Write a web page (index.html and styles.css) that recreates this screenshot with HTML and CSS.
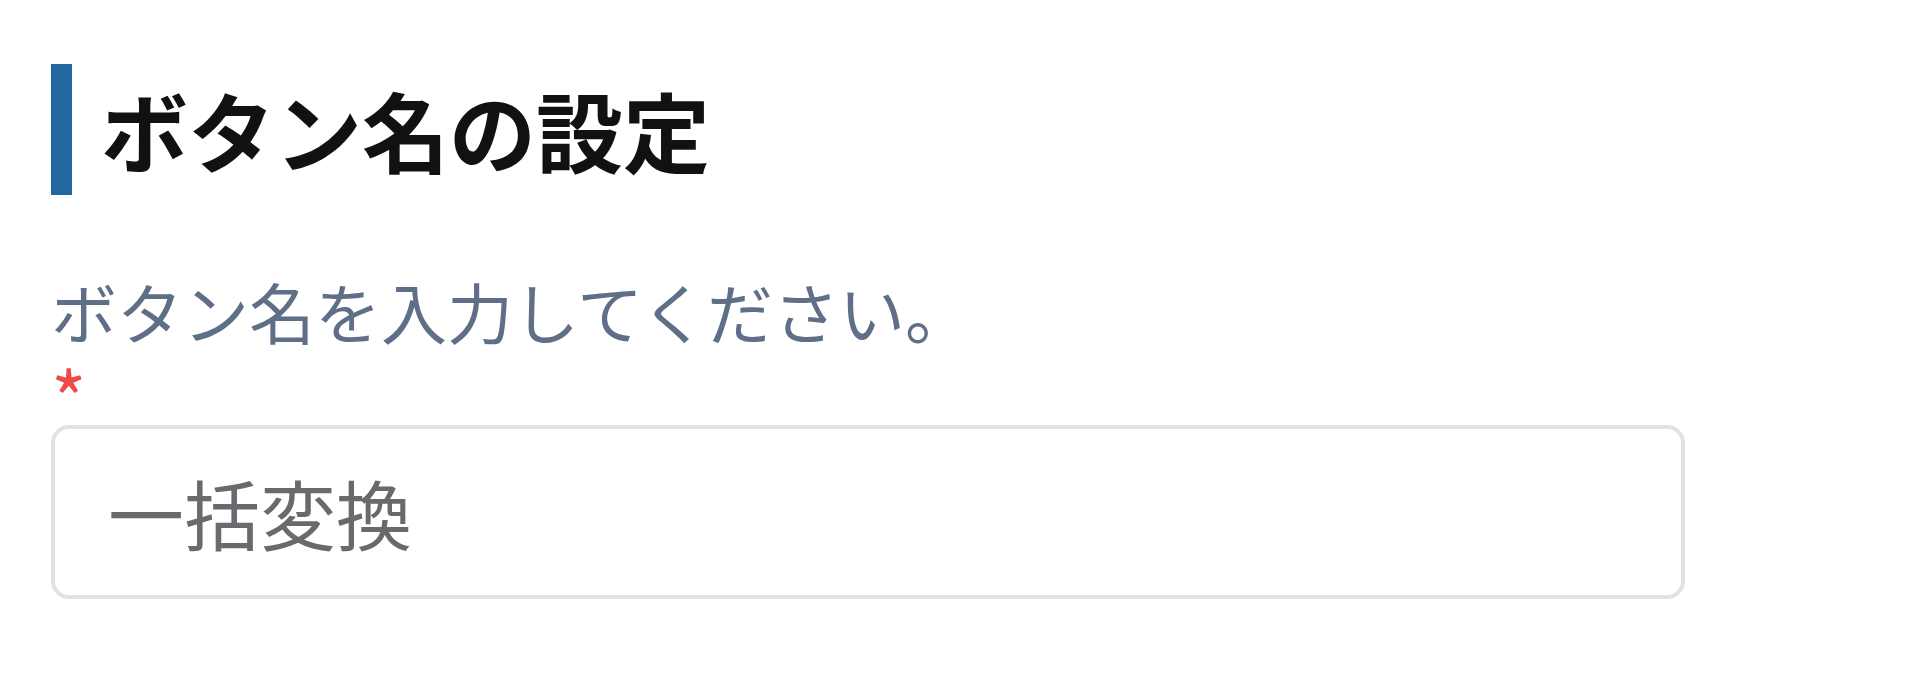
FILE: index.html
```html
<!DOCTYPE html>
<html lang="ja">
<head>
<meta charset="utf-8">
<link rel="stylesheet" href="styles.css">
</head>
<body>
<div class="section">
  <h2 class="title">ボタン名の設定</h2>
  <p class="desc">ボタン名を入力してください。</p>
  <span class="req">*</span>
  <div class="field">
    <input class="input" type="text" value="一括変換">
  </div>
</div>
</body>
</html>
```
FILE: styles.css
```css
html, body {
  margin: 0;
  padding: 0;
  background: #ffffff;
}
body {
  font-family: "Noto Sans CJK JP", "Noto Sans", sans-serif;
}
.section {
  display: flex;
  flex-direction: column;
  align-items: flex-start;
  padding: 64px 0 0 51px;
}
.title {
  display: flex;
  align-items: center;
  margin: 0;
  height: 131px;
  border-left: 21px solid #2267a0;
  padding-left: 29px;
  font-size: 87px;
  font-weight: 700;
  line-height: 1;
  color: #111111;
}
.desc {
  margin: 82px 0 0 0;
  font-size: 66px;
  line-height: 66px;
  color: #5f6f88;
}
.req {
  margin-top: 33px;
  font-size: 76px;
  line-height: 40px;
  height: 40px;
  color: #ee4a4a;
}
.field {
  margin-top: 9px;
  width: 1634px;
}
.input {
  box-sizing: border-box;
  display: block;
  width: 100%;
  height: 174px;
  margin: 0;
  border: 4px solid #dfe2e8;
  border-radius: 18px;
  padding: 0 0 0 53px;
  font-family: "Noto Sans CJK JP", "Noto Sans", sans-serif;
  font-size: 76px;
  color: #6a6a6e;
  background: #ffffff;
  outline: none;
}
```
